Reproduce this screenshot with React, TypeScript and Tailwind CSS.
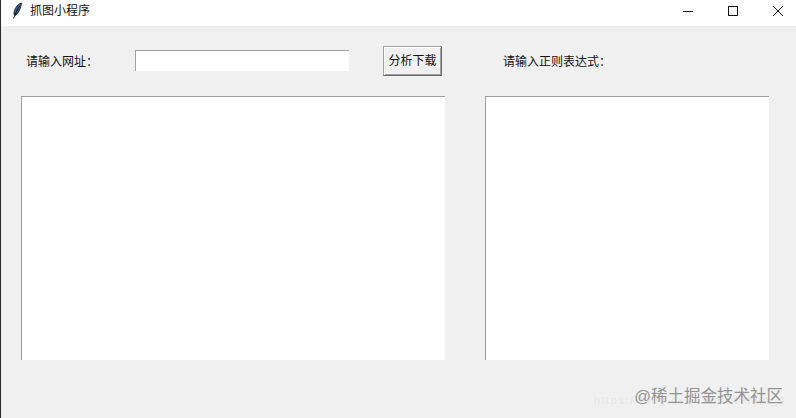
const cjk = "font-['Liberation_Sans','Noto_Sans_CJK_SC',sans-serif]";

function Feather() {
  return (
    <svg width="12" height="18" viewBox="0 0 12 18" className="shrink-0">
      <path d="M10.5 1C7 2 4.2 5.5 3.2 9.5C2.8 11.5 3 13 3.6 13.6C7 12.5 9.8 6.5 10.5 1Z" fill="#3b5f8f" stroke="#10203a" strokeWidth="0.9" />
      <path d="M8.5 4C6.5 7.5 4.5 11.5 2.5 16.5" fill="none" stroke="#111" strokeWidth="1" />
    </svg>
  );
}

function WinIcon({ children }: { children: React.ReactNode }) {
  return (
    <svg width="36" height="12" viewBox="0 0 36 12" fill="none" stroke="#111" strokeWidth="1" shapeRendering="crispEdges">
      {children}
    </svg>
  );
}

function App() {
  return (
    <div className={`relative w-[796px] h-[418px] overflow-hidden bg-[#f0f0f0] border-l border-[#2b2b2b] text-[12px] text-[#111] ${cjk}`}>
      <div className="h-[26px] bg-white flex items-center pl-[10px] pb-[5px]">
        <Feather />
        <span className="ml-[7px] leading-none">抓图小程序</span>
        <div className="ml-auto flex items-center gap-[9px]">
          <WinIcon><path d="M13 6.5H23" /></WinIcon>
          <WinIcon><rect x="13.5" y="1.5" width="9" height="9" /></WinIcon>
          <svg width="36" height="12" viewBox="0 0 36 12" fill="none" stroke="#111" strokeWidth="1"><path d="M13 1L23 11M23 1L13 11" /></svg>
        </div>
      </div>

      <div className="h-[70px] flex items-center pl-[25px]">
        <span className="w-[109px] mt-[1px]">请输入网址：</span>
        <div className="w-[214px] h-[21px] -mt-[1px] bg-white border-t border-l border-[#a0a0a0]" />
        <button className="ml-[34px] w-[59px] h-[30px] bg-[#f0f0f0] border border-t-[#a0a0a0] border-l-[#a0a0a0] border-r-[#696969] border-b-[#696969] shadow-[inset_1px_1px_0_#ffffff,inset_-1px_-1px_0_#a0a0a0]">分析下载</button>
        <span className="ml-[61px] mt-[1px]">请输入正则表达式：</span>
      </div>

      <div className="flex pl-[20px] gap-[40px]">
        <div className="w-[424px] h-[264px] bg-white border-t border-l border-[#a0a0a0]" />
        <div className="w-[284px] h-[264px] bg-white border-t border-l border-[#a0a0a0]" />
      </div>

      <div className="absolute right-[10px] bottom-[12px] text-[11px] tracking-[1.6px] leading-none text-[#e4e4e4] font-['Liberation_Sans',sans-serif]">https://blog.csdn.net/weixin_4</div>
      <div className="absolute right-[13px] bottom-[14px] text-[16.5px] leading-none text-[#949494]">@稀土掘金技术社区</div>
    </div>
  );
}

export default App;
